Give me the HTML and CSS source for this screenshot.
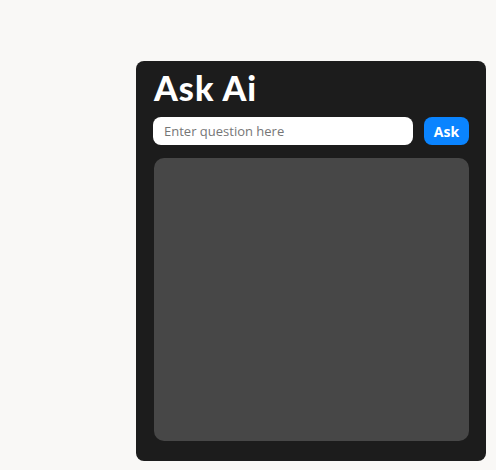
FILE: index.html
```html
<!DOCTYPE html>
<html>
<head>
<meta charset="utf-8">
<link rel="stylesheet" href="styles.css">
</head>
<body>
<div class="panel">
  <h1 class="title">Ask Ai</h1>
  <div class="ask-row">
    <input class="question" type="text" placeholder="Enter question here">
    <button class="ask-btn">Ask</button>
  </div>
  <div class="answer"></div>
</div>
</body>
</html>
```
FILE: styles.css
```css
html, body {
  margin: 0;
  padding: 0;
  background: #f9f8f6;
}
body {
  padding: 61px 0 0 136px;
  font-family: "Open Sans", "Liberation Sans", sans-serif;
}
.panel {
  box-sizing: border-box;
  width: 350px;
  height: 400px;
  background: #1c1c1c;
  border-radius: 8px;
  padding: 8px 17px 20px 17px;
  display: flex;
  flex-direction: column;
}
.title {
  margin: 0 0 0 1px;
  color: #ffffff;
  font-family: "Lato", "Open Sans", sans-serif;
  font-weight: 900;
  font-size: 34px;
  line-height: 38px;
  letter-spacing: 1px;
}
.ask-row {
  display: flex;
  align-items: center;
  gap: 11px;
  margin-top: 10px;
}
.question {
  box-sizing: border-box;
  width: 260px;
  height: 28px;
  border: none;
  border-radius: 8px;
  background: #ffffff;
  padding: 0 11px;
  font-family: "Open Sans", sans-serif;
  font-size: 13px;
  color: #333;
  outline: none;
}
.question::placeholder {
  color: #767676;
}
.ask-btn {
  box-sizing: border-box;
  width: 45px;
  height: 28px;
  border: none;
  border-radius: 8px;
  background: #0a84ff;
  color: #ffffff;
  font-family: "Open Sans", sans-serif;
  font-weight: 700;
  font-size: 14px;
  padding: 0;
}
.answer {
  flex: 1;
  margin: 13px 0 0 1px;
  background: #474747;
  border-radius: 10px;
}
```
